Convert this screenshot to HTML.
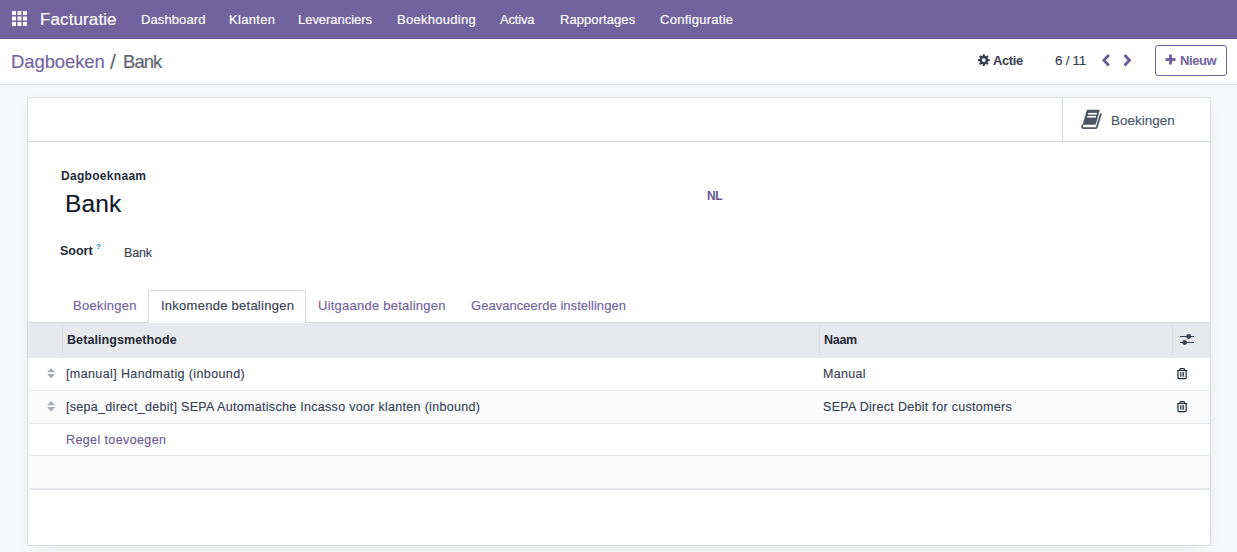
<!DOCTYPE html>
<html><head><meta charset="utf-8">
<style>
*{box-sizing:border-box;margin:0;padding:0}
html,body{width:1237px;height:552px;overflow:hidden;background:#f7f8fa;font-family:"Liberation Sans",sans-serif;color:#374151}
.a{position:absolute;white-space:nowrap;line-height:1;-webkit-text-stroke:.15px currentColor}
.a[style*="bold"]{-webkit-text-stroke:0}
#nav{position:absolute;left:0;top:0;width:1237px;height:39px;background:#71639e;border-bottom:1px solid #5e5287}
#nav .m{color:#fff;font-size:13px;top:13px}
#cp{position:absolute;left:0;top:39px;width:1237px;height:46px;background:#fff;border-bottom:1px solid #d9dce1}
#sheet{position:absolute;left:27px;top:97px;width:1184px;height:449px;background:#fff;border:1px solid #d9dce1;box-shadow:0 5px 20px -8px rgba(0,0,0,.12)}
.bb{position:absolute;left:0;top:0;width:1182px;height:44px;border-bottom:1px solid #d9dce1}
.btn{position:absolute;left:1034px;top:0;width:147px;height:44px;border-left:1px solid #d9dce1}
.hdr{position:absolute;left:0;top:225px;width:1182px;height:35px;background:#e7e9ed}
.tabline{position:absolute;left:0;top:224px;width:1182px;height:1px;background:#d9dce1}
.row{position:absolute;left:1px;width:1181px;height:33px;border-bottom:1px solid #e4e7eb}
</style></head><body>
<div id="nav">
  <svg class="a" style="left:12px;top:11px" width="15" height="15" viewBox="0 0 15 15" fill="#fff">
    <rect x="0" y="0" width="4" height="4"/><rect x="5.5" y="0" width="4" height="4"/><rect x="11" y="0" width="4" height="4"/>
    <rect x="0" y="5.5" width="4" height="4"/><rect x="5.5" y="5.5" width="4" height="4"/><rect x="11" y="5.5" width="4" height="4"/>
    <rect x="0" y="11" width="4" height="4"/><rect x="5.5" y="11" width="4" height="4"/><rect x="11" y="11" width="4" height="4"/>
  </svg>
  <div class="a" style="left:40px;top:11px;font-size:17px;color:#fff;letter-spacing:.11px">Facturatie</div>
  <div class="a m" style="left:141px;letter-spacing:.1px">Dashboard</div>
  <div class="a m" style="left:229px;letter-spacing:.33px">Klanten</div>
  <div class="a m" style="left:298px;letter-spacing:-.03px">Leveranciers</div>
  <div class="a m" style="left:397px;letter-spacing:.29px">Boekhouding</div>
  <div class="a m" style="left:500px;letter-spacing:-.16px">Activa</div>
  <div class="a m" style="left:560px;letter-spacing:.07px">Rapportages</div>
  <div class="a m" style="left:660px;letter-spacing:.27px">Configuratie</div>
</div>
<div id="cp">
  <div class="a" style="left:11px;top:14px;font-size:18.5px;color:#71639e;letter-spacing:-.1px">Dagboeken</div>
  <div class="a" style="left:110px;top:12px;font-size:21px;color:#5f636f">/</div>
  <div class="a" style="left:123px;top:14px;font-size:18.5px;color:#5f636f;letter-spacing:-.95px">Bank</div>
  <svg class="a" style="left:978px;top:15px" width="12" height="13" viewBox="0 0 12 13"><g fill="#374151"><circle cx="5.8" cy="6.1" r="4.3"/><rect x="4.7" y="0.2" width="2.2" height="3" rx=".5" transform="rotate(0 5.8 6.1)"/><rect x="4.7" y="0.2" width="2.2" height="3" rx=".5" transform="rotate(45 5.8 6.1)"/><rect x="4.7" y="0.2" width="2.2" height="3" rx=".5" transform="rotate(90 5.8 6.1)"/><rect x="4.7" y="0.2" width="2.2" height="3" rx=".5" transform="rotate(135 5.8 6.1)"/><rect x="4.7" y="0.2" width="2.2" height="3" rx=".5" transform="rotate(180 5.8 6.1)"/><rect x="4.7" y="0.2" width="2.2" height="3" rx=".5" transform="rotate(225 5.8 6.1)"/><rect x="4.7" y="0.2" width="2.2" height="3" rx=".5" transform="rotate(270 5.8 6.1)"/><rect x="4.7" y="0.2" width="2.2" height="3" rx=".5" transform="rotate(315 5.8 6.1)"/></g><circle cx="5.8" cy="6.1" r="1.9" fill="#fff"/></svg>
  <div class="a" style="left:993px;top:15px;font-size:13px;font-weight:bold;color:#374151;letter-spacing:-.4px">Actie</div>
  <div class="a" style="left:1055px;top:15px;font-size:13.5px;color:#374151;letter-spacing:-.3px">6 / 11</div>
  <svg class="a" style="left:1101px;top:15px" width="10" height="13" viewBox="0 0 10 13"><path d="M7.9 1.1 L2.9 6.25 L7.9 11.4" fill="none" stroke="#685b96" stroke-width="2.8"/></svg>
  <svg class="a" style="left:1123px;top:15px" width="10" height="13" viewBox="0 0 10 13"><path d="M1.5 1.1 L6.5 6.25 L1.5 11.4" fill="none" stroke="#685b96" stroke-width="2.8"/></svg>
  <div class="a" style="left:1155px;top:6px;width:72px;height:31px;border:1px solid #71639e;border-radius:3px"></div>
  <svg class="a" style="left:1165px;top:15px" width="11" height="11" viewBox="0 0 11 11"><path d="M5.5 0.5V10.5M0.5 5.5H10.5" stroke="#71639e" stroke-width="2.9"/></svg>
  <div class="a" style="left:1180px;top:15px;font-size:13px;font-weight:bold;color:#71639e;letter-spacing:-.4px">Nieuw</div>
</div>
<div id="sheet">
  <div class="bb"></div>
  <div class="btn"></div>
  <svg class="a" style="left:1052px;top:11px" width="23" height="21" viewBox="0 0 23 21"><path d="M7.7 0.8 H18.7 Q19.8 0.8 19.5 1.9 L16 14.8 Q15.7 15.8 14.7 15.8 H2.6 L6.6 1.7 Q6.9 0.8 7.7 0.8Z" fill="#4b5563"/><path d="M2.5 16.2 Q1.1 19.1 3.7 19.1 H15.8 Q16.6 19.1 16.8 18.3 L20.8 5.2" fill="none" stroke="#4b5563" stroke-width="1.8" stroke-linecap="round" stroke-linejoin="round"/><rect x="8.2" y="3.9" width="8.6" height="1.7" fill="#fff"/><rect x="7.3" y="6.9" width="8.6" height="1.7" fill="#fff"/></svg>
  <div class="a" style="left:1083px;top:16px;font-size:13.5px;color:#4b5563">Boekingen</div>

  <div class="a" style="left:33px;top:72px;font-size:12px;font-weight:bold;letter-spacing:.3px;color:#1f2937">Dagboeknaam</div>
  <div class="a" style="left:37px;top:94px;font-size:24.5px;letter-spacing:.1px;color:#111827">Bank</div>
  <div class="a" style="left:679px;top:92px;font-size:12px;font-weight:bold;letter-spacing:-.3px;color:#635795">NL</div>
  <div class="a" style="left:32px;top:147px;font-size:12.5px;font-weight:bold;color:#1f2937">Soort</div>
  <div class="a" style="left:68px;top:145px;font-size:8px;font-weight:bold;color:#0a86bd">?</div>
  <div class="a" style="left:96px;top:149px;font-size:12.5px;color:#374151;letter-spacing:-.2px">Bank</div>

  <div class="tabline"></div>
  <div class="a" style="left:120px;top:192px;width:158px;height:33px;border:1px solid #d9dce1;border-bottom:none;border-radius:3px 3px 0 0;background:#fff"></div>
  <div class="a" style="left:45px;top:201px;font-size:13px;color:#71639e;letter-spacing:.25px">Boekingen</div>
  <div class="a" style="left:133px;top:201px;font-size:13px;color:#374151;letter-spacing:.26px">Inkomende betalingen</div>
  <div class="a" style="left:290px;top:201px;font-size:13px;color:#71639e;letter-spacing:.24px">Uitgaande betalingen</div>
  <div class="a" style="left:443px;top:201px;font-size:13px;color:#71639e;letter-spacing:.04px">Geavanceerde instellingen</div>

  <div class="hdr"></div>
  <div class="a" style="left:34px;top:225px;width:1px;height:35px;background:#dde0e5"></div>
  <div class="a" style="left:791px;top:225px;width:1px;height:35px;background:#dde0e5"></div>
  <div class="a" style="left:1144px;top:225px;width:1px;height:35px;background:#dde0e5"></div>
  <div class="a" style="left:39px;top:236px;font-size:12.5px;font-weight:bold;color:#1f2937;letter-spacing:.09px">Betalingsmethode</div>
  <div class="a" style="left:796px;top:236px;font-size:12.5px;font-weight:bold;color:#1f2937;letter-spacing:-.27px">Naam</div>
  <svg class="a" style="left:1152px;top:236px" width="14" height="12" viewBox="0 0 14 12"><g stroke="#374151" stroke-width="1.1" stroke-linecap="round"><line x1="0.5" y1="2.5" x2="13.5" y2="2.5"/><line x1="0.5" y1="8.5" x2="13.5" y2="8.5"/></g><circle cx="8.7" cy="2.5" r="2.4" fill="#374151"/><circle cx="4.7" cy="8.5" r="2.4" fill="#374151"/></svg>

  <div class="row" style="top:260px;background:#fff"></div>
  <div class="row" style="top:293px;background:#fbfbfb"></div>
  <div class="row" style="top:326px;height:32px;background:#fff"></div>
  <div class="row" style="top:358px;background:#fbfbfb;height:34px;border-bottom:2px solid #e4e7eb"></div>

  <svg class="a" style="left:19px;top:270px" width="9" height="11" viewBox="0 0 9 11" fill="#a9aeb6"><path d="M4.1 0.1 L8.1 4.2 H0.1Z M4.1 10.6 L8.1 6.1 H0.1Z"/></svg>
  <svg class="a" style="left:19px;top:303px" width="9" height="11" viewBox="0 0 9 11" fill="#a9aeb6"><path d="M4.1 0.1 L8.1 4.2 H0.1Z M4.1 10.6 L8.1 6.1 H0.1Z"/></svg>
  <div class="a" style="left:38px;top:270px;font-size:12.5px;color:#374151;letter-spacing:.39px">[manual] Handmatig (inbound)</div>
  <div class="a" style="left:795px;top:270px;font-size:12.5px;color:#374151;letter-spacing:.3px">Manual</div>
  <div class="a" style="left:38px;top:303px;font-size:12.5px;color:#374151;letter-spacing:.3px">[sepa_direct_debit] SEPA Automatische Incasso voor klanten (inbound)</div>
  <div class="a" style="left:795px;top:303px;font-size:12.5px;color:#374151;letter-spacing:.3px">SEPA Direct Debit for customers</div>
  <svg class="a" style="left:1148px;top:269px" width="12" height="13" viewBox="0 0 12 13"><path d="M1.2 3.5H11.2M3.8 3.5V2.5Q3.8 1.6 4.7 1.6H7.6Q8.5 1.6 8.5 2.5V3.5M2 3.5V10.6Q2 11.6 3 11.6H9.2Q10.2 11.6 10.2 10.6V3.5" fill="none" stroke="#1f2937" stroke-width="1.2"/><path d="M4.6 5V9.8M6.1 5V9.8M7.6 5V9.8" stroke="#1f2937" stroke-width=".85"/></svg>
  <svg class="a" style="left:1148px;top:302px" width="12" height="13" viewBox="0 0 12 13"><path d="M1.2 3.5H11.2M3.8 3.5V2.5Q3.8 1.6 4.7 1.6H7.6Q8.5 1.6 8.5 2.5V3.5M2 3.5V10.6Q2 11.6 3 11.6H9.2Q10.2 11.6 10.2 10.6V3.5" fill="none" stroke="#1f2937" stroke-width="1.2"/><path d="M4.6 5V9.8M6.1 5V9.8M7.6 5V9.8" stroke="#1f2937" stroke-width=".85"/></svg>
  <div class="a" style="left:38px;top:336px;font-size:12.5px;color:#6a5c9a;letter-spacing:.39px">Regel toevoegen</div>
</div>
</body></html>
